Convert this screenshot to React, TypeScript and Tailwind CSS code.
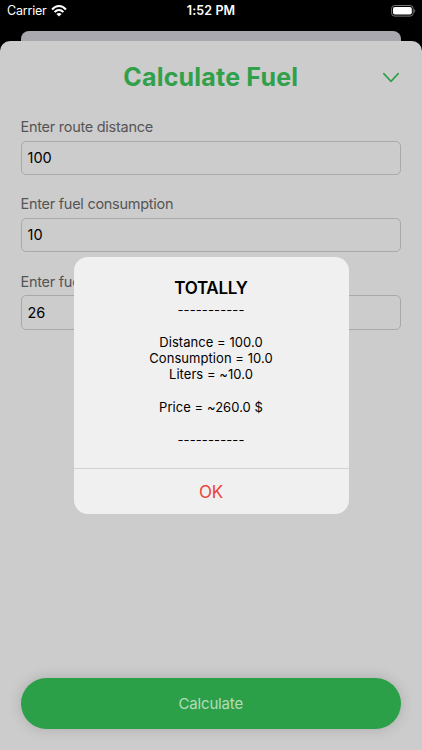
import { ReactNode } from "react";

const fields = [
  { label: "Enter route distance", value: "100" },
  { label: "Enter fuel consumption", value: "10" },
  { label: "Enter fuel price", value: "26" },
];

function StatusBar() {
  return (
    <header className="grid h-[31px] shrink-0 grid-cols-3 px-[7px] pt-[3px] text-white">
      <div className="flex h-4 items-center gap-[4px]">
        <span className="text-[12.5px] leading-4 tracking-[-0.2px]">Carrier</span>
        <svg width="16" height="12" viewBox="0 0 16 12" fill="none" stroke="white" strokeWidth="2.1">
          <path d="M1.1 4.5C5-.1 11-.1 14.9 4.5" />
          <path d="M3.6 7.1c2.6-2.8 6.2-2.8 8.8 0" />
          <path d="M8 11.6 5.4 8.9c1.5-1.3 3.7-1.3 5.2 0Z" fill="white" stroke="none" />
        </svg>
      </div>
      <div className="text-center text-[12.5px] leading-4 font-semibold tracking-[0.1px]">
        1:52 PM
      </div>
      <div className="flex h-4 items-center justify-end">
        <svg width="26" height="12" viewBox="0 0 26 12" className="-mr-[2px]">
          <rect x="0.6" y="0.5" width="21.6" height="10.6" rx="3" fill="none" stroke="#777" />
          <rect x="2" y="2" width="18.8" height="7.6" rx="1.8" fill="white" />
          <path d="M23.2 4v3.8c1.3-.6 1.3-3.2 0-3.8Z" fill="#777" />
        </svg>
      </div>
    </header>
  );
}

function Field({ label, value }: { label: string; value: string }) {
  return (
    <div className="h-[77.3px]">
      <label className="block h-[23.6px] text-[14.5px] leading-5 tracking-[-0.27px] text-[#555]">
        {label}
      </label>
      <div className="flex h-[34.4px] items-center rounded-[5px] border border-[#a9a9a9] px-[6px] text-[14.5px] text-black">
        {value}
      </div>
    </div>
  );
}

function Line({ children }: { children?: ReactNode }) {
  return (
    <p className="h-[16.25px] text-[13px] leading-[16.25px] tracking-[0.05px] whitespace-nowrap">
      {children}
    </p>
  );
}

function Divider() {
  return (
    <div className="pt-px">
      <p className="h-[15.25px] text-[13px] leading-[16.25px] tracking-[0.12px]">-----------</p>
    </div>
  );
}

function ResultDialog() {
  return (
    <div className="absolute top-[257px] left-[73.5px] flex h-[257px] w-[275px] flex-col overflow-hidden rounded-[14px] bg-[#f0f0f0] text-center text-black">
      <div className="h-[212px] border-b border-[#d2d2d2] pt-[20px]">
        <h2 className="text-[17px] leading-[22px] font-semibold tracking-[-0.3px]">TOTALLY</h2>
        <div className="pt-[2.4px]">
          <Divider />
          <Line />
          <Line>Distance = 100.0</Line>
          <Line>Consumption = 10.0</Line>
          <Line>Liters = ~10.0</Line>
          <Line />
          <Line>Price = ~260.0 $</Line>
          <Line />
          <Divider />
        </div>
      </div>
      <button className="flex-1 pt-[2px] text-[17px] tracking-[-0.2px] text-[#ea453a]">OK</button>
    </div>
  );
}

export default function App() {
  return (
    <div className="relative flex h-[750px] w-[422px] flex-col overflow-hidden bg-black font-['Inter',sans-serif]">
      <StatusBar />
      <div className="mx-[21px] h-[10px] shrink-0 rounded-t-[8px] bg-[#a9a8ae]" />
      <main className="flex flex-1 flex-col rounded-t-[10px] bg-[#cccccc] pr-[21px] pl-[20.5px]">
        <div className="grid h-[76px] shrink-0 grid-cols-[32px_1fr_32px] items-center pb-[3px]">
          <span />
          <h1 className="-mt-px text-center text-[25px] leading-8 font-bold tracking-[0.2px] whitespace-nowrap text-[#30a04a]">
            Calculate Fuel
          </h1>
          <svg width="18" height="12" viewBox="0 0 18 12" className="ml-[13px]" fill="none" stroke="#30a04a" strokeWidth="1.6" strokeLinecap="round" strokeLinejoin="round">
            <path d="m1.8 1.6 7.2 7.8 7.2-7.8" />
          </svg>
        </div>
        {fields.map((field) => (
          <Field key={field.label} {...field} />
        ))}
        <button className="mt-auto mb-[20.8px] h-[51px] rounded-full bg-[#2ca048] pt-[2px] text-[15px] tracking-[-0.15px] text-[#b4dcbc] shadow-[0_0_14px_rgba(0,0,0,0.16)]">
          Calculate
        </button>
      </main>
      <ResultDialog />
    </div>
  );
}
